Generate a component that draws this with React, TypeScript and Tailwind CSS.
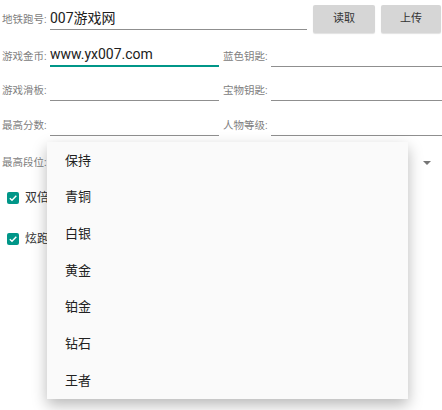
import { useState } from "react";

const ranks = ["保持", "青铜", "白银", "黄金", "铂金", "钻石", "王者"];

type FieldProps = { label: string; value?: string; focused?: boolean; className?: string };

const Field = ({ label, value, focused, className }: FieldProps) => (
  <div className={"flex items-end " + (className ?? "")}>
    <span className="w-[48px] shrink-0 pb-[4px] pl-[2px] text-[10.5px] leading-[13px] text-[#808080] whitespace-nowrap">
      {label}
    </span>
    <div
      className={
        "ml-[2px] flex h-[23px] grow items-end pb-[3px] text-[14px] leading-[16px] text-[#212121] " +
        (focused ? "border-b-2 border-[#009688]" : "border-b border-[#8f8f8f]")
      }>
      {value}
    </div>
  </div>
);

const Check = ({ label }: { label: string }) => (
  <div className="flex items-center gap-[6px] pl-[7px]">
    <span className="flex h-[12px] w-[12px] items-center justify-center rounded-[2px] bg-[#009688]">
      <svg width="10" height="10" viewBox="0 0 10 10">
        <path d="M1.8 5.2 L4 7.3 L8.3 2.8" stroke="white" strokeWidth="1.4" fill="none" />
      </svg>
    </span>
    <span className="text-[12px] leading-[14px] text-[#333]">{label}</span>
  </div>
);

export default function App() {
  const [open] = useState(true);

  return (
    <div
      className="relative h-[410px] w-[442px] overflow-hidden bg-white"
      style={{ fontFamily: 'Roboto, "Noto Sans CJK SC", sans-serif' }}>
      <div className="flex h-[37px] items-start">
        <Field label="地铁跑号:" value="007游戏网" className="mt-[7px] w-[307px]" />
        <button className="ml-[6px] mt-[5px] h-[28px] w-[62px] rounded-[2px] bg-[#d6d6d6] text-[11px] text-[#333] shadow-[0_1px_1px_rgba(0,0,0,0.12)]">
          读取
        </button>
        <button className="ml-[6px] mt-[5px] h-[28px] w-[60px] rounded-[2px] bg-[#d6d6d6] text-[11px] text-[#333] shadow-[0_1px_1px_rgba(0,0,0,0.12)]">
          上传
        </button>
      </div>

      <div className="flex h-[30px] items-end">
        <Field label="游戏金币:" value="www.yx007.com" focused className="w-[219px]" />
        <Field label="蓝色钥匙:" className="ml-[2px] w-[221px]" />
      </div>

      <div className="flex h-[34px] items-end">
        <Field label="游戏滑板:" className="w-[219px]" />
        <Field label="宝物钥匙:" className="ml-[2px] w-[221px]" />
      </div>

      <div className="flex h-[35px] items-end">
        <Field label="最高分数:" className="w-[219px]" />
        <Field label="人物等级:" className="ml-[2px] w-[221px]" />
      </div>

      <div className="flex h-[35px] items-center justify-between pt-[18px]">
        <span className="pl-[2px] text-[10.5px] leading-[13px] text-[#808080]">最高段位:</span>
        <svg width="8" height="4" viewBox="0 0 8 4" className="mr-[11px]">
          <path d="M0 0 L8 0 L4 4 Z" fill="#757575" />
        </svg>
      </div>

      <div className="mt-[20px] flex flex-col gap-[27px]">
        <Check label="双倍" />
        <Check label="炫跑" />
      </div>

      {open && (
        <div className="absolute left-[47px] top-[142px] w-[361px] bg-[#fafafa] shadow-[0_6px_14px_rgba(0,0,0,0.28)]">
          {ranks.map(r => (
            <div key={r} className="flex h-[36.7px] items-center pl-[18px] text-[13px] text-[#212121]">
              {r}
            </div>
          ))}
        </div>
      )}
    </div>
  );
}
